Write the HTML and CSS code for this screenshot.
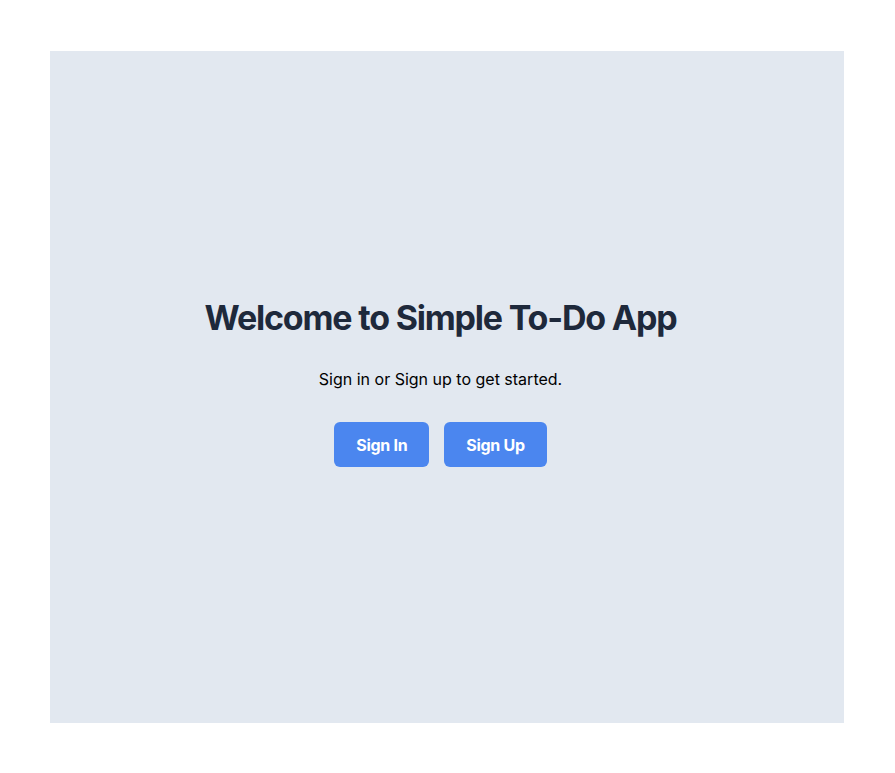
FILE: index.html
```html
<!DOCTYPE html>
<html lang="en">
<head>
<meta charset="utf-8">
<title>Simple To-Do App</title>
<link rel="stylesheet" href="styles.css">
</head>
<body>
<main class="panel">
  <div class="hero">
    <h1 class="title">Welcome to Simple To-Do App</h1>
    <p class="subtitle">Sign in or Sign up to get started.</p>
    <div class="actions">
      <button class="btn" type="button">Sign In</button>
      <button class="btn" type="button">Sign Up</button>
    </div>
  </div>
</main>
</body>
</html>
```
FILE: styles.css
```css
* { box-sizing: border-box; }
html, body { margin: 0; padding: 0; background: #ffffff; }
body {
  padding: 51px 51px 50px 50px;
  font-family: Inter, "Noto Sans", sans-serif;
}
.panel {
  height: 672px;
  background: #e2e8f0;
  display: flex;
  align-items: center;
  justify-content: center;
}
.hero {
  display: flex;
  flex-direction: column;
  align-items: center;
  margin: -9px 13px 0 0;
}
.title {
  margin: 0 0 29px;
  font-size: 34px;
  line-height: 40px;
  font-weight: 700;
  color: #1e293b;
  letter-spacing: -1.2px;
}
.subtitle {
  margin: 0 0 31px;
  font-size: 16px;
  line-height: 24px;
  color: #000000;
}
.actions {
  display: flex;
  gap: 15px;
}
.btn {
  font-family: inherit;
  font-size: 16px;
  line-height: 24px;
  font-weight: 700;
  color: #ffffff;
  background: #4b86ef;
  border: none;
  border-radius: 6px;
  padding: 10.5px 22px;
  letter-spacing: -0.3px;
  cursor: pointer;
}
```
